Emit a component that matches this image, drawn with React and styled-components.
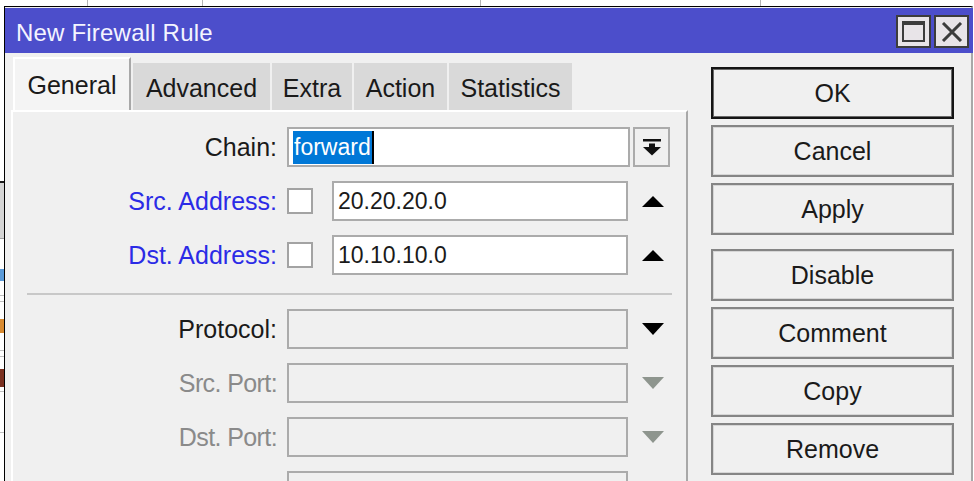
import styled, { createGlobalStyle } from "styled-components";

const GlobalStyle = createGlobalStyle`
  html, body {
    margin: 0;
    padding: 0;
    background: #ffffff;
    overflow: hidden;
  }
  body {
    font-family: "Liberation Sans", Arial, sans-serif;
  }
`;

/* Backdrop (the table behind the dialog) */

const Desktop = styled.div`
  width: 974px;
  height: 481px;
  display: flex;
  flex-direction: column;
  overflow: hidden;
  background: #ffffff;
`;

const TopStrip = styled.div`
  height: 6px;
  display: flex;
  flex-shrink: 0;
`;

const TopCell = styled.div`
  width: ${(p) => p.$w}px;
  flex-shrink: 0;
  border-right: 1px solid #b4b4b4;
  box-sizing: border-box;
`;

const MainRow = styled.div`
  flex: 1;
  display: flex;
  min-height: 0;
`;

const LeftStrip = styled.div`
  width: 4px;
  flex-shrink: 0;
  display: flex;
  flex-direction: column;
`;

const StripPiece = styled.div`
  height: ${(p) => p.$h}px;
  background: ${(p) => p.$bg || "transparent"};
  border-bottom: ${(p) => (p.$line ? `1px solid ${p.$line}` : "none")};
  flex-shrink: 0;
`;

/* Window */

const Window = styled.div`
  width: 966px;
  flex-shrink: 0;
  display: flex;
  flex-direction: column;
  border-left: 1px solid #000;
  border-top: 1px solid #000;
  border-right: 2px solid #a8a8a8;
  background: #f0f0f0;
  padding-top: 1px;
`;

const TitleBar = styled.div`
  height: 45px;
  flex-shrink: 0;
  background: #4c4ecb;
  display: flex;
  align-items: center;
  padding: 0 4px 0 11px;
  margin-right: -2px;
`;

const Title = styled.div`
  flex: 1;
  color: #f4f4ff;
  font-size: 24px;
  letter-spacing: 0.2px;
  padding-top: 4px;
`;

const TitleButton = styled.div`
  width: 35px;
  height: 33px;
  box-sizing: border-box;
  margin-left: 3px;
  margin-top: 2px;
  background: #e8e4e8;
  border: 2px solid #3c3c3c;
  display: flex;
  align-items: center;
  justify-content: center;
`;

const MaxIcon = styled.div`
  width: 23px;
  height: 21px;
  box-sizing: border-box;
  border: 2px solid #3c3c3c;
  border-top-width: 4px;
`;

/* Body */

const Body = styled.div`
  flex: 1;
  display: flex;
  padding: 4px 0 0 6px;
  min-height: 0;
`;

const LeftColumn = styled.div`
  width: 677px;
  display: flex;
  flex-direction: column;
`;

const TabStrip = styled.div`
  height: 53px;
  flex-shrink: 0;
  display: flex;
  align-items: flex-end;
  gap: 2px;
  padding-left: 2px;
`;

const Tab = styled.div`
  width: ${(p) => p.$w}px;
  height: ${(p) => (p.$active ? 53 : 47)}px;
  box-sizing: border-box;
  background: ${(p) => (p.$active ? "#f4f4f4" : "#d9d9d9")};
  border-left: ${(p) => (p.$active ? "2px solid #ffffff" : "none")};
  border-top: ${(p) => (p.$active ? "2px solid #ffffff" : "none")};
  border-right: ${(p) => (p.$active ? "2px solid #a8a8a8" : "none")};
  padding-top: ${(p) => (p.$active ? 12 : 11)}px;
  text-align: center;
  font-size: 25px;
  line-height: 28px;
  color: #1a1a1a;
  white-space: nowrap;
`;

const Panel = styled.div`
  flex: 1;
  background: #f0f0f0;
  border-left: 2px solid #ffffff;
  border-top: 2px solid #ffffff;
  border-right: 2px solid #a8a8a8;
  padding-top: 15px;
  display: flex;
  flex-direction: column;
  gap: 14px;
`;

const Row = styled.div`
  height: 40px;
  flex-shrink: 0;
  display: flex;
  align-items: center;
`;

const Label = styled.div`
  width: 264px;
  margin-right: 10px;
  text-align: right;
  font-size: 25px;
  color: ${(p) =>
    p.$tone === "link" ? "#2b2be6" : p.$tone === "muted" ? "#8a8a8a" : "#1a1a1a"};
  letter-spacing: ${(p) => (p.$tight ? "-0.6px" : "0")};
  white-space: nowrap;
`;

const Input = styled.div`
  width: ${(p) => p.$w}px;
  height: 40px;
  box-sizing: border-box;
  border: 2px solid #ababab;
  background: ${(p) => (p.$disabled ? "#f0f0f0" : "#ffffff")};
  display: flex;
  align-items: center;
  padding-left: 4px;
  font-size: 23px;
  color: #1a1a1a;
  flex-shrink: 0;
`;

const Selection = styled.span`
  background: #0078d7;
  color: #ffffff;
  line-height: 33px;
  padding: 0 1px;
  border-right: 2px solid #000;
`;

const Check = styled.div`
  width: 26px;
  height: 26px;
  box-sizing: border-box;
  border: 2px solid #a3a3a3;
  background: #ffffff;
  margin-right: 19px;
  flex-shrink: 0;
`;

const DropButton = styled.div`
  width: 37px;
  height: 40px;
  box-sizing: border-box;
  margin-left: 3px;
  border: 2px solid #ababab;
  background: #f0f0f0;
  display: flex;
  align-items: center;
  justify-content: center;
`;

const IconSlot = styled.div`
  width: 50px;
  display: flex;
  align-items: center;
  justify-content: center;
`;

const Separator = styled.div`
  height: 2px;
  flex-shrink: 0;
  background: #c8c8c8;
  margin: 4px 14px 0 14px;
`;

/* Buttons */

const ButtonColumn = styled.div`
  width: 243px;
  margin-left: 23px;
  padding-top: 10px;
  display: flex;
  flex-direction: column;
  gap: 6px;
`;

const Button = styled.div`
  height: 52px;
  box-sizing: border-box;
  flex-shrink: 0;
  border: 2px solid ${(p) => (p.$default ? "#141414" : "#858585")};
  box-shadow: inset 0 0 0 1px ${(p) => (p.$default ? "#6a6a6a" : "#d6d6d6")};
  background: #f0f0f0;
  display: flex;
  align-items: center;
  justify-content: center;
  font-size: 25px;
  color: #1a1a1a;
  margin-top: ${(p) => (p.$spaced ? 8 : 0)}px;
`;

/* Icons */

function UpArrow() {
  return (
    <svg width="22" height="11" viewBox="0 0 22 11">
      <polygon points="11,0 22,11 0,11" fill="#000" />
    </svg>
  );
}

function DownArrow({ color }) {
  return (
    <svg width="22" height="12" viewBox="0 0 22 12">
      <polygon points="0,0 22,0 11,12" fill={color} />
    </svg>
  );
}

function DropIcon() {
  return (
    <svg width="20" height="17" viewBox="0 0 20 17">
      <rect x="1" y="0" width="18" height="2.5" fill="#111" />
      <rect x="7" y="4.5" width="6" height="5" fill="#111" />
      <polygon points="1,8 19,8 10,16.5" fill="#111" />
    </svg>
  );
}

function CloseIcon() {
  return (
    <svg width="22" height="20" viewBox="0 0 22 20">
      <path d="M2 1 L20 19 M20 1 L2 19" stroke="#3c3c3c" strokeWidth="3" />
    </svg>
  );
}

const tabs = [
  { name: "General", w: 118, active: true },
  { name: "Advanced", w: 137 },
  { name: "Extra", w: 80 },
  { name: "Action", w: 93 },
  { name: "Statistics", w: 123 },
];

const buttons = ["OK", "Cancel", "Apply", "Disable", "Comment", "Copy", "Remove"];

const strip = [
  { h: 175 },
  { h: 2, bg: "#1a1a1a" },
  { h: 55, bg: "#d4d4d4", line: "#a0a0a0" },
  { h: 30 },
  { h: 12, bg: "#5a9ad8" },
  { h: 14, line: "#c0c0c0" },
  { h: 5, line: "#c0c0c0" },
  { h: 17 },
  { h: 14, bg: "#d88a30" },
  { h: 17, line: "#c0c0c0" },
  { h: 5, line: "#c0c0c0" },
  { h: 12 },
  { h: 18, bg: "#7a3020" },
  { h: 4, line: "#c0c0c0" },
  { h: 40, line: "#c0c0c0" },
];

export default function App() {
  return (
    <>
      <GlobalStyle />
      <Desktop>
        <TopStrip>
          <TopCell $w={88} />
          <TopCell $w={115} />
          <TopCell $w={278} />
          <TopCell $w={280} />
        </TopStrip>
        <MainRow>
          <LeftStrip>
            {strip.map((s, i) => (
              <StripPiece key={i} $h={s.h} $bg={s.bg} $line={s.line} />
            ))}
          </LeftStrip>
          <Window>
            <TitleBar>
              <Title>New Firewall Rule</Title>
              <TitleButton>
                <MaxIcon />
              </TitleButton>
              <TitleButton>
                <CloseIcon />
              </TitleButton>
            </TitleBar>
            <Body>
              <LeftColumn>
                <TabStrip>
                  {tabs.map((t) => (
                    <Tab key={t.name} $w={t.w} $active={t.active}>
                      {t.name}
                    </Tab>
                  ))}
                </TabStrip>
                <Panel>
                  <Row>
                    <Label>Chain:</Label>
                    <Input $w={343}>
                      <Selection>forward</Selection>
                    </Input>
                    <DropButton>
                      <DropIcon />
                    </DropButton>
                  </Row>
                  <Row>
                    <Label $tone="link">Src. Address:</Label>
                    <Check />
                    <Input $w={296}>20.20.20.0</Input>
                    <IconSlot>
                      <UpArrow />
                    </IconSlot>
                  </Row>
                  <Row>
                    <Label $tone="link">Dst. Address:</Label>
                    <Check />
                    <Input $w={296}>10.10.10.0</Input>
                    <IconSlot>
                      <UpArrow />
                    </IconSlot>
                  </Row>
                  <Separator />
                  <Row>
                    <Label>Protocol:</Label>
                    <Input $w={341} $disabled />
                    <IconSlot>
                      <DownArrow color="#000" />
                    </IconSlot>
                  </Row>
                  <Row>
                    <Label $tone="muted" $tight>
                      Src. Port:
                    </Label>
                    <Input $w={341} $disabled />
                    <IconSlot>
                      <DownArrow color="#8e958e" />
                    </IconSlot>
                  </Row>
                  <Row>
                    <Label $tone="muted" $tight>
                      Dst. Port:
                    </Label>
                    <Input $w={341} $disabled />
                    <IconSlot>
                      <DownArrow color="#8e958e" />
                    </IconSlot>
                  </Row>
                  <Row>
                    <Label />
                    <Input $w={341} $disabled />
                  </Row>
                </Panel>
              </LeftColumn>
              <ButtonColumn>
                {buttons.map((b) => (
                  <Button key={b} $default={b === "OK"} $spaced={b === "Disable"}>
                    {b}
                  </Button>
                ))}
              </ButtonColumn>
            </Body>
          </Window>
        </MainRow>
      </Desktop>
    </>
  );
}
